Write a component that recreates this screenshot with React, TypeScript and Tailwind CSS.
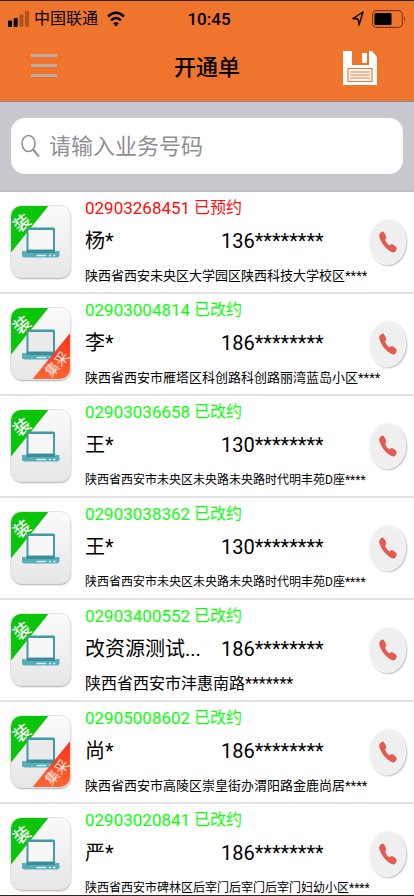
import { IoCall } from "react-icons/io5";

type Order = {
  id: string;
  status: string;
  tone: string;
  name: string;
  tel: string;
  address: string;
  size: string;
  bulk?: boolean;
};

const GREEN = "text-[#0cff0c]";

const orders: Order[] = [
  { id: "02903268451", status: "已预约", tone: "text-[#ff0c0c]", name: "杨*", tel: "136********", address: "陕西省西安未央区大学园区陕西科技大学校区****", size: "text-[13px]" },
  { id: "02903004814", status: "已改约", tone: GREEN, name: "李*", tel: "186********", address: "陕西省西安市雁塔区科创路科创路丽湾蓝岛小区****", size: "text-[13px]", bulk: true },
  { id: "02903036658", status: "已改约", tone: GREEN, name: "王*", tel: "130********", address: "陕西省西安市未央区未央路未央路时代明丰苑D座****", size: "text-[12px]" },
  { id: "02903038362", status: "已改约", tone: GREEN, name: "王*", tel: "130********", address: "陕西省西安市未央区未央路未央路时代明丰苑D座****", size: "text-[12px]" },
  { id: "02903400552", status: "已改约", tone: GREEN, name: "改资源测试...", tel: "186********", address: "陕西省西安市沣惠南路*******", size: "text-[16px]" },
  { id: "02905008602", status: "已改约", tone: GREEN, name: "尚*", tel: "186********", address: "陕西省西安市高陵区崇皇街办渭阳路金鹿尚居****", size: "text-[13px]", bulk: true },
  { id: "02903020841", status: "已改约", tone: GREEN, name: "严*", tel: "186********", address: "陕西省西安市碑林区后宰门后宰门后宰门妇幼小区****", size: "text-[12px]" },
];

function StatusBar() {
  return (
    <div className="grid h-[35px] grid-cols-3 items-center px-2 text-black">
      <div className="flex items-center gap-[5px]">
        <svg className="shrink-0" width="21" height="17" viewBox="0 0 21 17" aria-hidden="true">
          <rect x="0" y="10.500" width="4" height="6.500" rx="1" />
          <rect x="5.700" y="8" width="4" height="9" rx="1" />
          <rect x="11.400" y="4.500" width="4" height="12.500" rx="1" opacity=".28" />
          <rect x="17" y="1" width="4" height="16" rx="1" opacity=".28" />
        </svg>
        <span className="shrink-0 text-[16px] leading-5">中国联通</span>
        <svg className="ml-1 shrink-0" width="18" height="16" viewBox="0 0 18 16" aria-hidden="true">
          <path d="M1 5.5Q9-2 17 5.5M4 9.3Q9 4.5 14 9.3" fill="none" stroke="#000" strokeWidth="2.4" />
          <path d="M9 15.5 6.2 12.3Q9 9.8 11.8 12.3Z" />
        </svg>
      </div>
      <span className="pl-1 text-center text-[17px] font-medium leading-5">10:45</span>
      <div className="flex items-center justify-end gap-2">
        <svg width="12" height="15" viewBox="0 0 12 15" aria-hidden="true">
          <path d="M11 1 1 7.5 6 8 7 14Z" fill="none" stroke="#000" strokeWidth="1.4" strokeLinejoin="round" />
        </svg>
        <svg width="34" height="18" viewBox="0 0 34 18" aria-hidden="true">
          <rect x=".6" y=".6" width="29.8" height="16.8" rx="4" fill="none" stroke="#000" strokeOpacity=".5" strokeWidth="1.1" />
          <rect x="2.500" y="3" width="17" height="12" rx="1" />
          <path d="M32 6Q34 9 32 12Z" opacity=".5" />
        </svg>
      </div>
    </div>
  );
}

function OrderIcon({ bulk, n }: { bulk?: boolean; n: number }) {
  return (
    <svg className="shrink-0" width="64" height="76" viewBox="0 0 64 76" aria-hidden="true">
      <defs>
        <linearGradient id={`card${n}`} x2="0" y2="1">
          <stop stopColor="#fbfbfb" />
          <stop offset="1" stopColor="#e6e6e6" />
        </linearGradient>
        <linearGradient id={`red${n}`} x2="0" y2="1">
          <stop stopColor="#ff1800" />
          <stop offset="1" stopColor="#ff5a1e" />
        </linearGradient>
        <clipPath id={`clip${n}`}>
          <rect x="2" y="2" width="59" height="71" rx="10" />
        </clipPath>
      </defs>
      <rect x="3" y="4" width="60" height="72" rx="11" fill="#000" opacity=".07" />
      <rect x="2" y="3" width="60" height="72" rx="11" fill="#000" opacity=".18" />
      <rect x="1.5" y="1.5" width="60" height="72" rx="10" fill={`url(#card${n})`} stroke="#e2e2e2" />
      <g clipPath={`url(#clip${n})`}>
        <path d="M0 0H41L0 51Z" fill="#0bc50b" />
      </g>
      <path d="M19 23.500H44.500Q46 23.500 46 25V47H17.500V25Q17.500 23.500 19 23.500Z" fill="#4599a6" />
      <path d="M19.500 26H44V45.500H19.500Z" fill={bulk ? "#ebebeb" : "#f7f7f7"} />
      <path d="M13 47H16.500V49H47V47H50.500V51.500Q50.500 53.500 48 53.500H15.500Q13 53.500 13 51.500Z" fill="#56aebb" />
      <path d="M17.500 46H46L47 49H16.500Z" fill="#3d8e9b" />
      <path d="M27.500 51.500H37M40 51.500H42M44 51.500H46.500" stroke="#d3eef1" strokeWidth="1.600" />
      {bulk && (
        <g clipPath={`url(#clip${n})`}>
          <path d="M62 26V75H22Z" fill={`url(#red${n})`} opacity=".9" />
        </g>
      )}
      <text x="13" y="25" fontSize="17" fontWeight="500" fill="#fff" textAnchor="middle" transform="rotate(-38 13 19)">装</text>
      {bulk && <text x="48" y="63" fontSize="14" fill="#ffe9e2" textAnchor="middle" transform="rotate(-48 48 58)">集采</text>}
    </svg>
  );
}

function OrderRow({ order, n }: { order: Order; n: number }) {
  return (
    <li className="flex h-[102px] items-center border-b-2 border-[#e2e2e4] pl-[9px] pr-2">
      <OrderIcon bulk={order.bulk} n={n} />
      <div className="ml-3 min-w-0 flex-1">
        <p className={`flex gap-1 leading-6 ${order.tone}`}>
          <span className="text-[17px]">{order.id}</span>
          <span className="text-[16px]">{order.status}</span>
        </p>
        <div className="mt-[5px] flex text-[20px] leading-8">
          <span className="w-[124px] shrink-0 whitespace-nowrap">{order.name}</span>
          <span className="ml-3 whitespace-nowrap">{order.tel}</span>
        </div>
        <p className={`mt-[7px] whitespace-nowrap leading-6 ${order.size}`}>{order.address}</p>
      </div>
      <button
        type="button"
        aria-label={`拨打 ${order.name}`}
        className="flex h-[46px] w-[37px] shrink-0 items-center justify-center rounded-[50%] border border-[#f8f8f8] bg-[#efefef] text-[#e25a50] shadow-[1px_1px_2px_#bbb]"
      >
        <IoCall className="h-6 w-5" preserveAspectRatio="none" />
      </button>
    </li>
  );
}

export default function App() {
  return (
    <div className="h-screen overflow-hidden border-y border-[#33231a] bg-white font-['Roboto','Noto_Sans_CJK_SC',sans-serif] text-black">
      <header className="border-b border-[#8a8a8c] bg-[#f0752c]">
        <StatusBar />
        <div className="grid h-[65px] grid-cols-[1fr_auto_1fr] items-center pb-[2px] pl-[31px] pr-[37px]">
          <button type="button" aria-label="菜单" className="flex w-[26px] flex-col gap-[7px] pb-1">
            <span className="h-[3px] bg-[#bdaaa3]" />
            <span className="h-[3px] bg-[#bdaaa3]" />
            <span className="h-[3px] bg-[#bdaaa3]" />
          </button>
          <h1 className="pl-[6px] text-[22px] font-medium leading-8">开通单</h1>
          <button type="button" aria-label="保存" className="justify-self-end">
            <svg width="34" height="34" viewBox="0 0 34 34" aria-hidden="true">
              <path d="M0 0H9V14H26V0H29L34 6V34H0Z" fill="#fff" />
              <rect x="19" y="2" width="5" height="10" fill="#fff" />
              <path d="M5 17.500H29V30.500H5ZM7 21H27M7 24H27M7 27H27" fill="none" stroke="#f0752c" strokeWidth="1.200" />
            </svg>
          </button>
        </div>
      </header>
      <div className="border-b-2 border-[#c0c0c4] bg-[#c9c8ce] px-[11px] py-4">
        <label className="flex h-14 items-center gap-2 rounded-[14px] bg-white pl-[10px] text-[#8e8e93]">
          <svg className="shrink-0" width="20" height="24" viewBox="0 0 20 24" aria-hidden="true">
            <ellipse cx="7.500" cy="9.500" rx="6.500" ry="8" fill="none" stroke="currentColor" strokeWidth="1.500" />
            <path d="M12 15.500 18 22.500" stroke="currentColor" strokeWidth="2" />
          </svg>
          <input
            type="search"
            aria-label="业务号码"
            placeholder="请输入业务号码"
            className="w-full bg-transparent text-[22px] outline-none placeholder:text-[#8e8e93]"
          />
        </label>
      </div>
      <ul>
        {orders.map((order, n) => (
          <OrderRow key={order.id} order={order} n={n} />
        ))}
      </ul>
    </div>
  );
}
